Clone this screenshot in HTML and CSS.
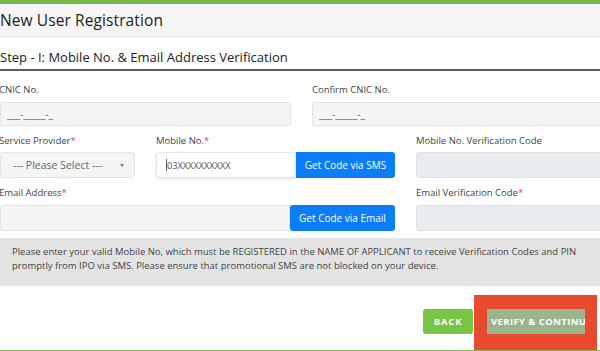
FILE: index.html
```html
<!DOCTYPE html>
<html>
<head>
<meta charset="utf-8">
<link rel="stylesheet" href="styles.css">
</head>
<body>
<div class="page">
  <div class="topbar"></div>
  <div class="header"><h1 class="title">New User Registration</h1></div>
  <div class="step"><h2 class="step-title">Step - I: Mobile No. &amp; Email Address Verification</h2></div>
  <div class="form">
    <div class="row row1">
      <div class="field">
        <label class="label lab-first">CNIC No.</label>
        <div class="input gray">___-_____-_</div>
      </div>
      <div class="field">
        <label class="label">Confirm CNIC No.</label>
        <div class="input gray">___-_____-_</div>
      </div>
    </div>
    <div class="row row2">
      <div class="field">
        <label class="label lab-first">Service Provider<span class="req">*</span></label>
        <div class="select">--- Please Select --- <span class="caret"></span></div>
      </div>
      <div class="field">
        <label class="label">Mobile No.<span class="req">*</span></label>
        <div class="group">
          <div class="input white"><span class="cursor"></span>03XXXXXXXXXX</div>
          <div class="btn-blue sms">Get Code via SMS</div>
        </div>
      </div>
      <div class="field">
        <label class="label">Mobile No. Verification Code</label>
        <div class="input disabled"></div>
      </div>
    </div>
    <div class="row row3">
      <div class="field">
        <label class="label lab-first">Email Address<span class="req">*</span></label>
        <div class="group">
          <div class="input gray email"></div>
          <div class="btn-blue mailbtn">Get Code via Email</div>
        </div>
      </div>
      <div class="field">
        <label class="label">Email Verification Code<span class="req">*</span></label>
        <div class="input disabled"></div>
      </div>
    </div>
  </div>
  <div class="info">Please enter your valid Mobile No, which must be REGISTERED in the NAME OF APPLICANT to receive Verification Codes and PIN<br>promptly from IPO via SMS. Please ensure that promotional SMS are not blocked on your device.</div>
  <div class="actions">
    <div class="btn back">BACK</div>
    <div class="btn verify">VERIFY &amp; CONTINU</div>
    <div class="highlight"></div>
  </div>
  <div class="bottombar"></div>
</div>
</body>
</html>
```
FILE: styles.css
```css
* { box-sizing: border-box; }
html, body { margin: 0; padding: 0; }
body {
  width: 600px;
  height: 351px;
  overflow: hidden;
  background: #fff;
  font-family: "Open Sans", "Liberation Sans", sans-serif;
  color: #333;
}
.page { width: 600px; height: 351px; display: flex; flex-direction: column; }
.topbar { height: 4px; background: #7bb94a; flex: none; }
.header {
  height: 33px;
  background: #f6f6f6;
  border-bottom: 1px solid #e2e2e2;
  display: flex;
  align-items: center;
  flex: none;
}
.title { margin: 0; font-size: 15.5px; font-weight: 500; color: #222; letter-spacing: 0.1px; }
.step {
  height: 34px;
  border-bottom: 2px solid #5c5c5c;
  display: flex;
  align-items: flex-end;
  padding-bottom: 3px;
  flex: none;
}
.step-title { margin: 0; font-size: 13px; font-weight: 500; color: #222; }
.form { padding-top: 12px; display: flex; flex-direction: column; gap: 8px; flex: none; }
.row { display: grid; column-gap: 21px; }
.row1 { grid-template-columns: 291px 300px; }
.row2 { grid-template-columns: 135px 239px 200px; }
.row3 { grid-template-columns: 395px 200px; }
.row2, .row3 { gap: 7px 21px; }
.field { display: flex; flex-direction: column; }
.label { font-size: 9.5px; line-height: 14px; color: #444; margin-bottom: 5px; }
.lab-first { margin-left: -1px; }
.req { color: #e0405a; }
.input {
  height: 24px;
  border: 1px solid #e3e3e3;
  border-radius: 3px;
  font-size: 10px;
  color: #666;
  display: flex;
  align-items: center;
  padding-left: 6px;
}
.gray { background: #f4f5f6; }
.row2 .input, .row2 .select, .row2 .btn-blue, .row3 .input, .row3 .btn-blue { height: 26px; }
.row2 .label { margin-bottom: 4px; }
.row3 .label { margin-bottom: 5px; }
.disabled { background: #e9ecef; border-color: #e0e0e0; }
.select {
  background: #f4f5f6;
  border: 1px solid #e3e3e3;
  border-radius: 3px;
  font-size: 10.5px;
  color: #666;
  display: flex;
  align-items: center;
  padding-left: 12px;
  position: relative;
}
.caret {
  position: absolute;
  right: 10px;
  top: 11px;
  width: 0; height: 0;
  border-left: 2.5px solid transparent;
  border-right: 2.5px solid transparent;
  border-top: 3px solid #777;
}
.group { display: flex; }
.white {
  width: 140px;
  background: #fff;
  border-color: #e6e6e6;
  box-shadow: 0 1px 3px rgba(0,0,0,0.12);
  padding-left: 9px;
  font-size: 9.2px;
  color: #555;
  border-radius: 3px 0 0 3px;
}
.cursor { width: 1px; height: 12px; background: #555; }
.email { width: 290px; border-radius: 3px 0 0 3px; }
.btn-blue {
  background: #0b7df6;
  color: #fff;
  font-size: 10px;
  display: flex;
  align-items: center;
  justify-content: center;
  border-radius: 0 3px 3px 0;
}
.sms { width: 99px; }
.mailbtn { width: 105px; border-radius: 3px; }
.info {
  margin-top: 7px;
  height: 48px;
  background: #e3e3e3;
  font-size: 9.5px;
  line-height: 14px;
  color: #444;
  padding: 7px 0 0 12px;
  flex: none;
  white-space: nowrap;
}
.actions {
  position: relative;
  display: flex;
  justify-content: flex-end;
  gap: 14px;
  padding: 23px 15px 0 0;
  height: 64px;
  flex: none;
}
.btn {
  height: 25px;
  border-radius: 3px;
  color: #fff;
  font-weight: 700;
  font-size: 9.5px;
  letter-spacing: 0.8px;
  display: flex;
  align-items: center;
  position: relative;
  z-index: 1;
}
.back { width: 50px; background: #78c445; justify-content: center; }
.verify {
  width: 98px;
  background: #98b58b;
  padding-left: 4px;
  letter-spacing: 0.4px;
  overflow: hidden;
  white-space: nowrap;
  border-radius: 0;
}
.highlight {
  position: absolute;
  left: 474px;
  top: 9px;
  width: 123px;
  height: 55px;
  background: #e84a30;
}
.bottombar { height: 2px; background: #7bb94a; flex: none; }
```
